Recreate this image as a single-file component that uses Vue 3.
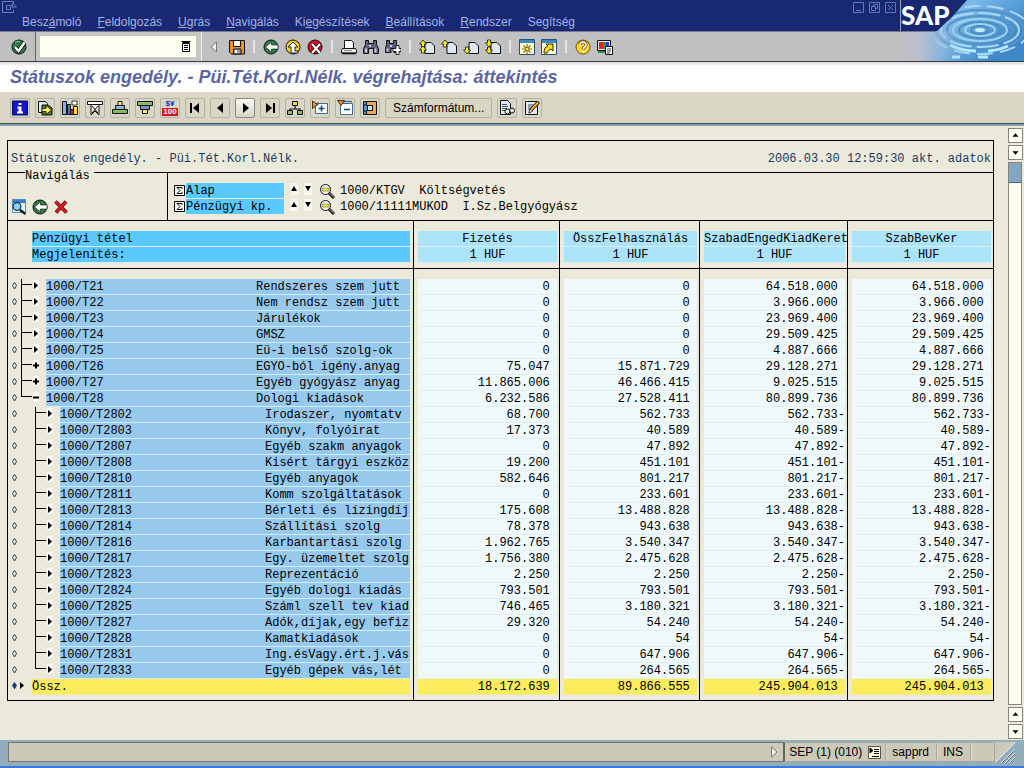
<script setup>
import { h, ref } from 'vue'

const disc = 'M8 1a7 7 0 1 0 0 14a7 7 0 1 0 0-14z'
const K = '#111'
const page = (x) => [`M${x} 3.500h6l3.500 3.500v7.500h-9.500z`, '#dde8f2', K]
const up = (x, y) => [`M${x} ${y}l3.500 4h-2v3h-3v-3h-2z`, '#ffee22', K, 0.8]
const down = (x, y) => [`M${x} ${y}l3.500-4h-2v-3h-3v3h-2z`, '#ffee22', K, 0.8]
const lens = 'M6.5 1.5a5 5 0 1 0 0 10a5 5 0 1 0 0-10z'

const icons = {
  check: [[disc, '#2e7d46', K], ['M4 3.500a5 5 0 0 1 5-1', 'none', '#8fd0a0', 1], ['M4 8l3.500 4l6-8.500', 'none', K, 4], ['M4 8l3.500 4l6-8.500', 'none', '#fff', 2.4]],
  save: [['M.5 1.500h15v13.500h-13l-2-2z', '#f0932b', K], ['M4.500 1.500h7v6h-7z', '#fff8e0', K], ['M4.500 10h7.500v5h-7.500z', '#9aa2a8', K], ['M6 11h2v3h-2z', '#fff']],
  back: [[disc, '#2e7d46', K], ['M2.500 8l6-5v3h6.500v4h-6.500v3z', '#fff', K, 0.6]],
  up: [[disc, '#f7d327', K], ['M8 3l5 5h-3v4h3v2h-7v-6h-3z', '#fff', K, 0.9]],
  cancel: [[disc, '#d3141c', K], ['M5 5l8 9M13 5l-8 9', 'none', K, 3.4], ['M5 5l8 9M13 5l-8 9', 'none', '#fff', 2]],
  print: [['M3.500 1.500h7l2 2v6h-9z', '#fff', K], ['M1.500 9.500h13l1 2v2.500h-15v-2.500z', '#e8e8e4', K], ['M1 14.500h14', 'none', K, 1.6], ['M3 11.500h8', 'none', '#888', 1]],
  find: [['M2.500 1.500h3v3h5v-3h3v4l2 4v5h-5v-5h-5v5h-5v-5l2-4z', '#5a5f7d', K], ['M2 9.500h2v4h-2zM11.500 9.500h2v4h-2zM6 6h2v2h-2z', '#c7cbe0']],
  findNext: [['M1.500 1.500h3v3h4v-3h3v4l1.500 4v4h-4v-4h-3v4h-5.500v-4l1-4z', '#5a5f7d', K], ['M1.500 9.500h2v3h-2zM5 6h2v2h-2z', '#c7cbe0'], ['M11 6.500h3v3h2v3h-2v3h-3v-3h-3v-3h3z', '#fff', K, 0.9]],
  first: [page(6), up(4, 1), up(4, 7)],
  prev: [page(6), up(4, 1)],
  next: [page(6), down(4, 15)],
  last: [page(6), down(4, 8), down(4, 15)],
  session: [['M.5.5h15v15h-15z', '#fffbd0', '#27506e'], ['M1 1h14v3h-14z', '#3d8ac0'], ['M8 5v10M3 10h10M4.500 6.500l7 7M11.500 6.500l-7 7', 'none', '#806c00', 1.1], ['M7 9h2v2h-2z', '#ffec20']],
  shortcut: [['M.5.5h15v15h-15z', '#fffbd0', '#27506e'], ['M1 1h14v3h-14z', '#3d8ac0'], ['M3 14c0-4 1-6 4-7l-2-2h7v7l-2-2c-2 1-3 2-4 4z', '#ffe31a', K, 0.9]],
  help: [[disc, '#ffd632', '#6d5200'], ['M5 6q0-3 3-3t3 3q0 1.500-2.500 3v1.500', 'none', '#6d4300', 3.2], ['M5 6q0-3 3-3t3 3q0 1.500-2.500 3v1.500M8.500 12v2', 'none', '#fff', 1.6]],
  layout: [['M.5 1.500h13v10h-13z', '#eee', K], ['M2 3h4v7h-4z', '#e82020'], ['M6 3h3v7h-3z', '#20a040'], ['M9 3h3v7h-3z', '#2040d0'], ['M1 13h8', 'none', '#2e8a50', 2], ['M8.500 7.500h7v8h-7z', '#fff', K], ['M10 10h4M10 12h4M10 14h3', 'none', K, 0.8]],
  info: [['M.5 1h15v14h-15z', '#1414cc', '#0a0a70'], ['M6.500 3h3v2h-3zM5.500 6.500h4v5h1.500v2h-6v-2h1.500v-3h-1z', '#fff']],
  exportDoc: [['M1.500 1.500h7l2 2v9h-9z', '#e2eaf0', K], ['M5 5h6l4 3v7h-10z', '#507a32', K], ['M5 8.500h4v-3l5.500 4.500l-5.500 4.500v-3h-4z', '#ffee55', K, 0.8]],
  bars: [['M.5 1.500h4v13h-4z', '#7fb3dd', K], ['M5.500 4.500h3v10h-3z', '#4d7ea8', K], ['M8.500 9.500h3v5h-3z', '#d9202a', K], ['M11.500 6.500h4v8h-4z', '#ffe635', K], ['M10 1h5v4h-5z', '#fff', K, 0.8]],
  sumUp: [['M.5 1.500h15v3h-15z', '#fff', K], ['M4 4.500h8v10.500l-4-4l-4 4z', '#f3f3ec', K], ['M5 6l6 7M11 6l-6 7', 'none', K, 1]],
  sortUp: [['M6 1.500h4v4h-4z', '#ffe877', K], ['M3.500 5.500h9v4h-9z', '#8ab9de', K], ['M.5 9.500h15v4h-15z', '#8dbb5e', K]],
  sortDown: [['M.5 1.500h15v4h-15z', '#8dbb5e', K], ['M3.500 5.500h9v4h-9z', '#7697d4', K], ['M5.500 9.500h5v4h-5z', '#ffe877', K]],
  tree: [['M8 6v3M3 11v-2h10v2', 'none', K, 1.2], ['M5.500 1.500h5v4h-5z', '#f0da42', K], ['M.5 10.500h5v4h-5z', '#99b968', K], ['M10.500 10.500h5v4h-5z', '#99b968', K]],
  expand: [['M3.500 3.500h12v10h-12z', '#fff', '#456990'], ['M6 2v3h-4', 'none', '#456990', 1], ['M9.500 5.500v6M6.500 8.500h6', 'none', '#155086', 1.6], ['M.5 1l5 3.500l-5 4z', '#f0932b', K, 0.8]],
  collapse: [['M3.500 3.500h12v11h-12z', '#fff', '#456990'], ['M6 1.500h9', 'none', '#456990', 1.4], ['M7 9.500h6', 'none', '#155086', 1.6], ['M.5.5h7l-3.500 5z', '#f0932b', K, 0.8]],
  hold: [['M1.500 1.500h13v13h-13z', '#5c98cf', K], ['M4.500 1.500h10v13h-10v-4h6v-5h-6z', '#e8ad58', K], ['M5.500 5.500h5v5h-5z', '#d0e5f8', K], ['M1 5h3M1 11h3', 'none', K, 1]],
  docLink: [['M1.500.5h7l3 3v11h-10z', '#dde8f2', K], ['M3 4.500h5M3 6.500h6M3 8.500h5M3 10.500h4', 'none', '#456', 1], ['M8.500 9a2.500 2.500 0 1 0 0 5a2 2 0 1 0 0-5zM13 8a2.500 2.500 0 1 1 0 5a2 2 0 1 1 0-5z', '#e9f1e8', K, 1]],
  edit: [['M1.500 1.500h12v13h-12z', '#dde8f2', K], ['M4 5h6M4 7h5M4 9h4', 'none', '#456', 1], ['M5 13l1-4l7.500-8l2 2l-7.500 8z', '#f4a52d', K], ['M5 13l1-4l3 2z', '#fff2c9', K, 0.6]],
  toFirst: [['M4 3v10', 'none', '#000', 2], ['M12 3v10l-6-5z', '#000']],
  left: [['M11 3v10l-6-5z', '#000']],
  right: [['M6 3v10l6-5z', '#000']],
  toLast: [['M12 3v10', 'none', '#000', 2], ['M4 3v10l6-5z', '#000']],
  overview: [['M1.500.5h13v13h-13z', '#e9f1fa', '#5d87b4'], ['M2 1h12v3h-12z', '#3481cf'], ['M6 3.500a4 4 0 1 0 0 8a4 4 0 1 0 0-8z', '#8ad0fa', K], ['M9 11l5.500 4', 'none', K, 2.4]],
  drop: [['M2.500 2.500l11 11M13 2.500l-10 11', 'none', '#500', 3.6], ['M2.500 2.500l11 11M13 2.500l-10 11', 'none', '#e01b24', 2.2]],
  zoomOut: [[lens, '#f4f6f4', K], ['M3 5h7v3h-7z', '#f4ea32', '#666', 0.6], ['M10 10l5 5', 'none', K, 3], ['M10.500 10l4.500 4.500', 'none', '#bbb', 1]],
  list: [['M3 2h10l-3 3h-4z', '#000'], ['M4.500 4.500h7v8h-7z', '#fff', '#000'], ['M6 6.500h4M6 8.500h4M6 10.500h4', 'none', '#000', 1]],
}

const Icon = (props) =>
  h('svg', { class: 'icon', viewBox: '0 0 16 16', 'aria-hidden': 'true' },
    icons[props.name].map(([d, fill, stroke = 'none', width = 1]) =>
      h('path', { d, fill, stroke, 'stroke-width': width })))
Icon.props = ['name']

const menus = [
  ['Besz', 'á', 'moló'], ['', 'F', 'eldolgozás'], ['', 'U', 'grás'], ['', 'N', 'avigálás'],
  ['Ki', 'e', 'gészítések'], ['', 'B', 'eállítások'], ['', 'R', 'endszer'], ['Se', 'g', 'ítség'],
]
const mainTools = ['save', '|', 'back', 'up', 'cancel', '|', 'print', 'find', 'findNext', '|',
  'first', 'prev', 'next', 'last', '|', 'session', 'shortcut', '|', 'help', 'layout']
const appTools = ['info', 'exportDoc', 'bars', 'sumUp', 'sortUp', 'sortDown', 'currency', 'toFirst', 'left',
  'right', 'toLast', 'tree', 'expand', 'collapse', 'hold']

const command = ref('')

const filters = [
  ['Alap', '1000/KTGV  Költségvetés'],
  ['Pénzügyi kp.', '1000/11111MUKOD  I.Sz.Belgyógyász'],
]
const columns = ['Fizetés', 'ÖsszFelhasználás', 'SzabadEngedKiadKeret', 'SzabBevKer']

const top = [
  ['T21', 'Rendszeres szem jutt', '0', '0', '64.518.000', 'leaf'],
  ['T22', 'Nem rendsz szem jutt', '0', '0', '3.966.000', 'leaf'],
  ['T23', 'Járulékok', '0', '0', '23.969.400', 'leaf'],
  ['T24', 'GMSZ', '0', '0', '29.509.425', 'leaf'],
  ['T25', 'Eü-i belső szolg-ok', '0', '0', '4.887.666', 'leaf'],
  ['T26', 'EGYO-ból igény.anyag', '75.047', '15.871.729', '29.128.271', 'plus'],
  ['T27', 'Egyéb gyógyász anyag', '11.865.006', '46.466.415', '9.025.515', 'plus'],
  ['T28', 'Dologi kiadások', '6.232.586', '27.528.411', '80.899.736', 'minus'],
]
const sub = [
  ['T2802', 'Irodaszer, nyomtatv', '68.700', '562.733'],
  ['T2803', 'Könyv, folyóirat', '17.373', '40.589'],
  ['T2807', 'Egyéb szakm anyagok', '0', '47.892'],
  ['T2808', 'Kisért tárgyi eszköz', '19.200', '451.101'],
  ['T2810', 'Egyéb anyagok', '582.646', '801.217'],
  ['T2811', 'Komm szolgáltatások', '0', '233.601'],
  ['T2813', 'Bérleti és lízingdíj', '175.608', '13.488.828'],
  ['T2814', 'Szállítási szolg', '78.378', '943.638'],
  ['T2816', 'Karbantartási szolg', '1.962.765', '3.540.347'],
  ['T2817', 'Egy. üzemeltet szolg', '1.756.380', '2.475.628'],
  ['T2823', 'Reprezentáció', '2.250', '2.250'],
  ['T2824', 'Egyéb dologi kiadás', '793.501', '793.501'],
  ['T2825', 'Száml szell tev kiad', '746.465', '3.180.321'],
  ['T2827', 'Adók,díjak,egy befiz', '29.320', '54.240'],
  ['T2828', 'Kamatkiadások', '0', '54'],
  ['T2831', 'Ing.ésVagy.ért.j.vás', '0', '647.906'],
  ['T2833', 'Egyéb gépek vás,lét', '0', '264.565'],
]
const rows = [
  ...top.map(([code, name, a, b, c, kind], i) => ({
    code, name, kind, level: 1, last: i === top.length - 1, values: [a, b, c, c].map((v) => v + ' '),
  })),
  ...sub.map(([code, name, a, b], i) => ({
    code, name, kind: 'leaf', level: 2, last: i === sub.length - 1, values: [a + ' ', b + ' ', b + '-', b + '-'],
  })),
]
const totals = ['18.172.639 ', '89.866.555 ', '245.904.013 ', '245.904.013 ']
const marks = {
  leaf: 'M2 3l4 3.500l-4 3.500z',
  plus: 'M1 5.500h2v-2h2v2h2v2h-2v2h-2v-2h-2z',
  minus: 'M1 5.500h6v2h-6z',
}
</script>

<template>
  <div class="window">
    <header class="head">
      <div class="head-main">
        <div class="titlebar">
          <svg class="sysicon" viewBox="0 0 16 12" aria-hidden="true">
            <path d="M11.500 2.500V.5H.5v11h11V8.500M4.500 4.500h6V2l4 4h-6v2.500H4.500z" fill="none" stroke="#6d7fc0" />
          </svg>
          <span class="winbtns">
            <button aria-label="Kis méret"><svg viewBox="0 0 11 11"><path d="M.5.5h10v10H.5zM3 8.500h5" /></svg></button>
            <button aria-label="Előző méret"><svg viewBox="0 0 11 11"><path d="M.5.5h10v10H.5zM4.500 4.500v-2h4v4h-2M2.500 4.500h4v4h-4z" /></svg></button>
            <button aria-label="Bezárás"><svg viewBox="0 0 11 11"><path d="M.5.5h10v10H.5zM3 3l5 5M8 3l-5 5" /></svg></button>
          </span>
        </div>
        <nav class="menu">
          <a v-for="m in menus" :key="m.join('')" href="#">{{ m[0] }}<u>{{ m[1] }}</u>{{ m[2] }}</a>
        </nav>
        <div class="toolbar">
          <button class="tool enter" aria-label="Enter"><Icon name="check" /></button>
          <div class="command">
            <input v-model="command" type="text" aria-label="Parancsmező" />
            <button class="tool" aria-label="Parancsok"><Icon name="list" /></button>
          </div>
          <svg class="arrow" viewBox="0 0 8 12" aria-hidden="true"><path d="M6.500 1v10L1 6z" fill="#eee" stroke="#777" /></svg>
          <template v-for="(t, i) in mainTools" :key="i">
            <span v-if="t === '|'" class="sep"></span>
            <button v-else class="tool" :aria-label="t"><Icon :name="t" /></button>
          </template>
        </div>
      </div>
      <div class="brand">
        <svg class="ripple" viewBox="0 0 124 61" aria-hidden="true">
          <defs>
            <linearGradient id="water" x1="0" y1="0" x2="1" y2="0.5">
              <stop offset="0" stop-color="#8fb6dc" />
              <stop offset="0.5" stop-color="#79b8e8" />
              <stop offset="1" stop-color="#3f88c8" />
            </linearGradient>
            <linearGradient id="fade" x1="0" y1="0" x2="1" y2="0">
              <stop offset="0" stop-color="#c0c0c0" />
              <stop offset="0.3" stop-color="#bcbecb" />
              <stop offset="1" stop-color="#8fb6dc" stop-opacity="0" />
            </linearGradient>
          </defs>
          <path d="M0 0H124V61H0z" fill="url(#water)" />
          <g fill="none" stroke-width="2">
            <ellipse cx="80" cy="30" rx="49" ry="24" stroke="#a8d6f4" stroke-dasharray="16 7" />
            <ellipse cx="80" cy="30" rx="44" ry="20" stroke="#5394c8" />
            <ellipse cx="80" cy="30" rx="39" ry="17" stroke="#a8d8f4" stroke-dasharray="22 5" />
            <ellipse cx="80" cy="30" rx="33" ry="14" stroke="#5394c8" />
            <ellipse cx="80" cy="30" rx="27" ry="11" stroke="#a0d2f0" />
            <ellipse cx="80" cy="30" rx="21" ry="8" stroke="#4b8dc4" />
            <ellipse cx="80" cy="30" rx="15" ry="6" stroke="#a0d2f0" />
            <ellipse cx="80" cy="30" rx="9" ry="4" stroke="#4b8dc4" />
            <ellipse cx="80" cy="30" rx="4" ry="1" stroke="#c8ecfc" />
            <path d="M50 45q12 6 26 6M88 51q12-1 20-5M52 57h8M78 57h10" stroke="#b4ecff" stroke-width="3" />
          </g>
          <path d="M0 31H62V61H0z" fill="url(#fade)" />
          <path d="M0 0H67L52 17L37 31H0z" fill="#182872" />
          <path d="M0 31.500H36" stroke="#777b92" />
          <path d="M.5 0V31" stroke="#9aa2bd" />
        </svg>
        <span class="sap">SAP</span>
      </div>
    </header>

    <h1>Státuszok engedély. - Püi.Tét.Korl.Nélk. végrehajtása: áttekintés</h1>

    <div class="apptools">
      <button v-for="t in appTools" :key="t" class="appbtn" :class="{ active: t === 'right' }" :aria-label="t">
        <span v-if="t === 'currency'" class="currency"><span>$¥</span><span>100</span></span>
        <Icon v-else :name="t" />
      </button>
      <button class="appbtn wide">Számformátum...</button>
      <button class="appbtn" aria-label="docLink"><Icon name="docLink" /></button>
      <button class="appbtn" aria-label="edit"><Icon name="edit" /></button>
    </div>

    <main class="work">
      <section class="report">
        <div class="caption">
          <span>Státuszok engedély. - Püi.Tét.Korl.Nélk.</span>
          <span>2006.03.30 12:59:30 akt. adatok</span>
        </div>
        <div class="navigation">
          <div class="actions">
            <span class="legend">Navigálás</span>
            <button class="tool" aria-label="overview"><Icon name="overview" /></button>
            <button class="tool" aria-label="back"><Icon name="back" /></button>
            <button class="tool" aria-label="drop"><Icon name="drop" /></button>
          </div>
          <div class="filters">
            <div v-for="f in filters" :key="f[0]" class="filter">
              <svg class="sigma" viewBox="0 0 11 11" aria-hidden="true">
                <path d="M.5.5h10v10H.5z" fill="#fff" stroke="#000" />
                <path d="M8 4V2.500H3l3 3l-3 3h5V7" fill="none" stroke="#000" />
              </svg>
              <span class="label">{{ f[0] }}</span>
              <button class="step" aria-label="Előző"><svg viewBox="0 0 8 12"><path d="M1 8l3-5l3 5z" /></svg></button>
              <button class="step" aria-label="Következő"><svg viewBox="0 0 8 12"><path d="M1 3l3 5l3-5z" /></svg></button>
              <button class="tool lens" aria-label="Szűrő törlése"><Icon name="zoomOut" /></button>
              <span class="value">{{ f[1] }}</span>
            </div>
          </div>
        </div>

        <table>
          <colgroup>
            <col />
            <col class="c1" />
            <col class="c2" />
            <col class="c3" />
            <col class="c4" />
          </colgroup>
          <thead>
            <tr>
              <th class="item"><div>Pénzügyi tétel</div><div>Megjelenítés:</div></th>
              <th v-for="c in columns" :key="c"><div>{{ c }}</div><div>1 HUF</div></th>
            </tr>
          </thead>
          <tbody>
            <tr v-for="r in rows" :key="r.code">
              <td class="name">
                <div class="line">
                  <svg class="branch" :class="'level' + r.level" :viewBox="r.level === 1 ? '0 0 38 16' : '0 0 52 16'" aria-hidden="true">
                    <path d="M6.500 3.500l2 3l-2 3.500l-2-3.500z" fill="none" stroke="#1b3d70" />
                    <g :transform="r.level === 1 ? null : 'translate(14 0)'">
                      <path :d="(r.last ? 'M13.500 0V6' : 'M13.500 0V16') + 'M13 5.500H24'" fill="none" stroke="#000" />
                      <path d="M25 1h6v10h-6z" fill="#f6f7f3" />
                      <path :d="marks[r.kind]" transform="translate(24 0)" />
                    </g>
                  </svg>
                  <div class="fill"><span class="code">1000/{{ r.code }}</span><span>{{ r.name }}</span></div>
                </div>
              </td>
              <td v-for="(v, i) in r.values" :key="i" class="num"><div class="fill">{{ v }}</div></td>
            </tr>
          </tbody>
          <tfoot>
            <tr>
              <td class="name">
                <div class="line">
                  <svg class="branch level0" viewBox="0 0 24 16" aria-hidden="true">
                    <path d="M6.500 3l2.500 3.500l-2.500 4l-2.500-4z" fill="#123c80" />
                    <path d="M12 3l4 3.500l-4 3.500z" />
                  </svg>
                  <div class="fill">Össz.</div>
                </div>
              </td>
              <td v-for="(v, i) in totals" :key="i" class="num"><div class="fill">{{ v }}</div></td>
            </tr>
          </tfoot>
        </table>
      </section>

      <div class="scroll">
        <button aria-label="Fel"><svg viewBox="0 0 15 15"><path d="M4 9l3.500-4L11 9z" /></svg></button>
        <button aria-label="Le"><svg viewBox="0 0 15 15"><path d="M4 6l3.500 4L11 6z" /></svg></button>
        <div class="track"><div class="thumb"></div></div>
        <button aria-label="Lap fel"><svg viewBox="0 0 15 15"><path d="M4 9l3.500-4L11 9z" /></svg></button>
        <button aria-label="Lap le"><svg viewBox="0 0 15 15"><path d="M4 6l3.500 4L11 6z" /></svg></button>
      </div>
    </main>

    <footer class="status">
      <div class="message">
        <svg viewBox="0 0 8 12" aria-hidden="true"><path d="M1.500 1v10L7 6z" fill="#eee" stroke="#777" /></svg>
      </div>
      <div class="cell first">
        <span>SEP (1) (010)</span>
        <svg class="pop" viewBox="0 0 13 13" aria-hidden="true">
          <path d="M.5.5h12v12H.5z" fill="#ffffe0" stroke="#555" />
          <path d="M2 2v5l3-2.500zM6 3.500h5M6 5.500h5M6 7.500h5M4 10.500h7" stroke="#000" />
        </svg>
      </div>
      <div class="cell">sapprd</div>
      <div class="cell">INS</div>
      <div class="cell blank"></div>
      <svg class="grip" viewBox="0 0 29 22" aria-hidden="true">
        <path d="M0 0H20L0 20z" fill="#cdc9b9" />
        <path d="M0 20.500L20 .5" fill="none" stroke="#fff" />
        <path d="M6 21L20 7M10 21L20 11M14 21L20 15" fill="none" stroke="#e8f0f4" />
        <path d="M7 21L20 8M11 21L20 12M15 21L20 16" fill="none" stroke="#5a7585" />
      </svg>
    </footer>
  </div>
</template>

<style>
body {
  margin: 0;
}
</style>

<style scoped>
.window {
  display: flex;
  flex-direction: column;
  min-height: 100vh;
  box-sizing: border-box;
  border-bottom: 2px solid #3b78d8;
  background: #ebe9d9;
  color: #000;
  font: 12px/16px "Liberation Sans", sans-serif;
}
button {
  padding: 0;
  border: 0;
  background: none;
  color: inherit;
  font: inherit;
}
svg {
  display: block;
  flex: none;
}
.icon {
  width: 16px;
  height: 16px;
}
.head {
  display: grid;
  grid-template-columns: 1fr 124px;
  border-bottom: 1px solid #3c3c44;
}
.titlebar {
  display: flex;
  justify-content: space-between;
  height: 13px;
  padding: 1px 4px 0 2px;
  box-sizing: border-box;
  background: #182872;
}
.sysicon {
  width: 16px;
  height: 12px;
}
.winbtns {
  display: flex;
  gap: 5px;
  padding-top: 1px;
}
.winbtns svg {
  width: 11px;
  height: 11px;
  fill: none;
  stroke: #6475b4;
}
.menu {
  display: flex;
  gap: 16px;
  height: 18px;
  padding-left: 22px;
  background: #182872;
  line-height: 18px;
}
.menu a {
  color: #a3b3e6;
  text-decoration: none;
}
.toolbar {
  display: flex;
  align-items: center;
  gap: 6px;
  height: 30px;
  box-sizing: border-box;
  border-top: 1px solid #777b92;
  background: #c0c0c0;
}
.tool {
  display: block;
  flex: none;
}
.enter {
  padding-left: 11px;
}
.command {
  position: relative;
  display: flex;
  align-items: center;
  width: 167px;
  height: 29px;
  margin-left: 2px;
  padding-left: 4px;
  box-sizing: border-box;
  border-left: 1px solid #666;
  border-right: 1px solid #eee;
  background: #c6c6c4;
}
.command input {
  width: 156px;
  height: 21px;
  padding: 0 20px 0 4px;
  box-sizing: border-box;
  border: 0;
  background: #fffff0;
  font: inherit;
  outline: 0;
}
.command .tool {
  position: absolute;
  right: 7px;
}
.arrow {
  width: 8px;
  height: 12px;
  margin: 0 5px 0 2px;
}
.sep {
  width: 6px;
  height: 13px;
  background: linear-gradient(90deg, transparent 2px, #e6e6e6 2px, #e6e6e6 4px, transparent 4px);
}
.brand {
  position: relative;
}
.ripple {
  width: 124px;
  height: 61px;
}
.sap {
  position: absolute;
  top: 0;
  left: 1px;
  color: #f4fbff;
  font: 900 26px/30px Lato, sans-serif;
}
h1 {
  margin: 0;
  padding-left: 10px;
  border-bottom: 2px solid #dcdac8;
  background: linear-gradient(#d8d8d8, #fff 4px);
  color: #5b669f;
  font: italic bold 18px/30px "Liberation Sans", sans-serif;
}
.apptools {
  display: flex;
  gap: 5px;
  padding: 4px 10px 5px;
  border-bottom: 1px solid #3c5058;
  background: #d9d6c5;
}
.appbtn {
  display: flex;
  align-items: center;
  justify-content: center;
  width: 20px;
  height: 20px;
  box-sizing: border-box;
  border: 1px solid #b5b2a2;
  border-radius: 2px;
}
.active {
  border-color: #8a8878;
  background: linear-gradient(#fbfbf8, #d5d3c6);
}
.wide {
  width: auto;
  padding: 0 7px;
}
.currency {
  display: grid;
  width: 16px;
  color: #2030b0;
  font: bold 8px/8px "Liberation Sans", sans-serif;
  text-align: center;
}
.currency span + span {
  background: #d3141c;
  color: #fff;
}
.work {
  display: flex;
  flex: 1;
  align-items: stretch;
  border-top: 2px solid #8ba0ab;
}
.report {
  flex: 1;
  align-self: flex-start;
  min-width: 0;
  margin: 14px 14px 0 7px;
  border: 1px solid #000;
  font: 12px/16px "Liberation Mono", monospace;
}
.caption {
  display: flex;
  justify-content: space-between;
  padding: 10px 2px 5px 3px;
  color: #193a66;
}
.navigation {
  display: flex;
  border-top: 1px solid #000;
  border-bottom: 1px solid #000;
}
.actions {
  position: relative;
  display: flex;
  align-items: flex-end;
  gap: 5px;
  width: 159px;
  padding: 0 0 5px 3px;
  box-sizing: border-box;
}
.legend {
  position: absolute;
  top: -5px;
  left: 17px;
  padding-right: 4px;
  background: #ebe9d9;
  line-height: 16px;
}
.filters {
  flex: 1;
  padding: 10px 0 5px 6px;
  border-left: 1px solid #000;
}
.filter {
  display: flex;
  height: 16px;
  white-space: pre;
}
.sigma {
  width: 11px;
  height: 11px;
  margin: 2px 1px 0 0;
}
.label {
  width: 98px;
  height: 15px;
  margin-right: 6px;
  background: #5bc9ff;
}
.step {
  width: 8px;
  height: 12px;
  margin-right: 6px;
  background: #f6f7f3;
}
.step svg {
  width: 8px;
  height: 12px;
}
.lens {
  margin-left: 1px;
  margin-right: 5px;
}
table {
  width: 100%;
  border-spacing: 0;
  table-layout: fixed;
}
.c1 {
  width: 146px;
}
.c2 {
  width: 140px;
}
.c3 {
  width: 148px;
}
.c4 {
  width: 145px;
}
th,
td {
  padding: 0 2px 0 4px;
  border-right: 1px solid #000;
  white-space: pre;
}
th:last-child,
td:last-child {
  border-right: 0;
}
th {
  padding-top: 10px;
  padding-bottom: 5px;
  border-bottom: 1px solid #000;
  font-weight: normal;
}
th div {
  height: 15px;
  border-bottom: 1px solid #d6f0f4;
  background: #abe3fb;
}
.item {
  padding-left: 24px;
  text-align: left;
}
.item div {
  background: #5bc9ff;
}
.name {
  padding-left: 0;
}
.item,
.name {
  padding-right: 3px;
}
.line {
  display: flex;
}
.branch {
  height: 16px;
}
.level0 {
  width: 24px;
}
.level1 {
  width: 38px;
}
.level2 {
  width: 52px;
}
.fill {
  height: 15px;
  border-bottom: 1px solid #e4efef;
  background: #eff8fb;
}
.name .fill {
  display: flex;
  flex: 1;
  min-width: 0;
  border-color: #d3eefb;
  background: #97c9ed;
}
.code {
  flex: none;
  width: 210px;
}
.level2 + .fill .code {
  width: 205px;
}
.num {
  text-align: right;
}
tbody tr:first-child td {
  padding-top: 10px;
}
tfoot td {
  padding-bottom: 5px;
}
tfoot .fill,
tfoot .name .fill {
  border-color: #f3e8a0;
  background: #faec5c;
}
.scroll {
  display: flex;
  flex-direction: column;
  gap: 2px;
  width: 16px;
  padding: 2px 0 1px;
}
.scroll button {
  width: 15px;
  height: 15px;
  box-sizing: border-box;
  border: 1px solid #85857d;
  background: #fdfdf4;
}
.scroll button svg {
  width: 13px;
  height: 13px;
}
.track {
  flex: 1;
  width: 14px;
  box-sizing: border-box;
  border: 1px solid #85857d;
  background: #fdfdee;
}
.thumb {
  height: 19px;
  border-bottom: 1px solid #55656f;
  background: #84a6c2;
}
.status {
  display: flex;
  align-items: flex-start;
  height: 26px;
  padding: 2px 0 0 8px;
  box-sizing: border-box;
  background: #92aebc;
}
.message {
  display: flex;
  flex: 1;
  align-items: center;
  justify-content: flex-end;
  height: 20px;
  padding-right: 5px;
  box-sizing: border-box;
  border: 1px solid #77756a;
  border-right: 0;
  background: #cdc9b9;
}
.message svg {
  width: 8px;
  height: 12px;
}
.cell {
  display: flex;
  align-items: center;
  gap: 6px;
  height: 20px;
  padding: 0 7px 0 5px;
  box-sizing: border-box;
  border: 1px solid #aaa698;
  border-left-color: #dedbd0;
  background: #cdc9b9;
}
.first {
  padding: 0 4px;
  border-left: 2px solid #66645a;
}
.blank {
  width: 24px;
}
.pop {
  width: 13px;
  height: 13px;
}
.grip {
  width: 29px;
  height: 22px;
}
</style>
